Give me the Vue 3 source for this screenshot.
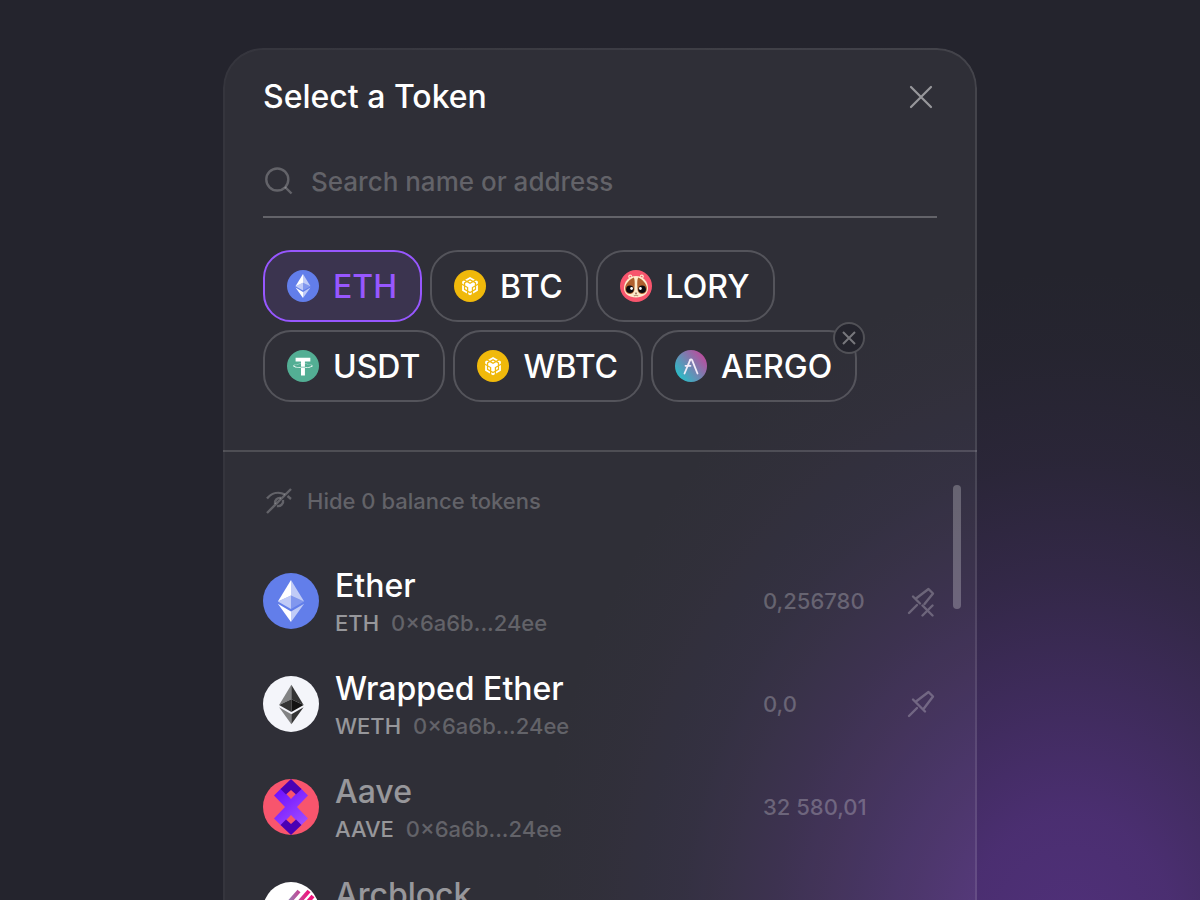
<template>
  <main class="page">
    <section class="modal" aria-labelledby="modal-title">
      <div class="modal-top">
        <header class="modal-header">
          <h1 id="modal-title">Select a Token</h1>
          <button type="button" class="icon-button" aria-label="Close">
            <svg width="32" height="32" viewBox="0 0 32 32" fill="none" stroke="currentColor" stroke-width="2.200" stroke-linecap="round">
              <path d="M6 6l20 20M26 6L6 26" />
            </svg>
          </button>
        </header>

        <div class="search">
          <label for="token-search" aria-label="Search name or address">
            <svg width="32" height="32" viewBox="0 0 32 32" fill="none" stroke="currentColor" stroke-width="2.400">
              <circle cx="14.300" cy="14.500" r="11" />
              <path d="M22 22l6.500 6.500" />
            </svg>
          </label>
          <input id="token-search" v-model="query" type="text" placeholder="Search name or address" />
        </div>

        <div class="chips">
          <div v-for="chip in chips" :key="chip.label" class="chip-wrapper">
            <button type="button" class="chip" :class="{ active: chip.label === selected }" @click="selected = chip.label">
              <svg class="chip-icon" viewBox="0 0 32 32" aria-hidden="true">
                <use :href="`#${chip.icon}`" />
              </svg>
              <span>{{ chip.label }}</span>
            </button>
            <button v-if="chip.removable" type="button" class="chip-remove" :aria-label="`Remove ${chip.label}`">
              <svg width="16" height="16" viewBox="0 0 16 16" fill="none" stroke="currentColor" stroke-width="2">
                <path d="M2 2l12 12M14 2L2 14" />
              </svg>
            </button>
          </div>
        </div>
      </div>

      <div class="modal-list">
        <button type="button" class="hide-toggle">
          <svg width="32" height="32" viewBox="0 0 32 32" fill="none" stroke="currentColor" stroke-width="2.400">
            <path d="M4 28L28 4" />
            <path d="M4 13.500c5-6 12-7 18-4M24.500 11l3.500 3" />
            <path d="M12 19a5 5 0 0 1 6-6M20 15a5 5 0 0 1-6 6" />
          </svg>
          <span>Hide 0 balance tokens</span>
        </button>

        <ul class="tokens">
          <li v-for="token in tokens" :key="token.name" class="token">
            <svg class="token-icon" :viewBox="token.viewBox || '0 0 32 32'" aria-hidden="true">
              <use :href="`#${token.icon}`" />
            </svg>
            <div class="token-info">
              <h2 :class="{ muted: token.muted }">{{ token.name }}</h2>
              <p>
                <span class="token-symbol">{{ token.symbol }}</span>
                <span class="token-address">{{ token.address }}</span>
              </p>
            </div>
            <span class="token-amount">{{ token.amount }}</span>
            <span class="token-action">
              <button v-if="token.pin" type="button" class="icon-button pin" :aria-label="`${token.pin} ${token.name}`">
                <svg width="32" height="32" viewBox="0 0 32 32" fill="none" stroke="currentColor" stroke-width="2.400" stroke-linecap="round" stroke-linejoin="round">
                  <path d="M4 28l8-8" />
                  <template v-if="token.pin === 'Unpin'">
                    <path d="M8 11.500l7 7M11 13.500L23.500 4l4.500 4.500-8.500 10.500" />
                    <path d="M17.500 20.500l10 10M27.500 20.500l-10 10" />
                  </template>
                  <path v-else d="M8 11.500l12 12M11 13.500L23.500 4l4.500 4.500-9.500 12.500" />
                </svg>
              </button>
            </span>
          </li>
        </ul>
        <div class="scrollbar"></div>
      </div>
    </section>

    <!-- 아이콘 심볼 -->
    <svg class="symbols" width="0" height="0" aria-hidden="true">
      <defs>
        <linearGradient id="aergo-fill" x1="4" y1="26" x2="28" y2="6" gradientUnits="userSpaceOnUse">
          <stop offset="0" stop-color="#2ebac6" />
          <stop offset="1" stop-color="#b6509e" />
        </linearGradient>
        <linearGradient id="aave-fill" x1="12" y1="10" x2="42" y2="46" gradientUnits="userSpaceOnUse">
          <stop offset="0" stop-color="#6a0dff" />
          <stop offset="1" stop-color="#a24dff" />
        </linearGradient>
        <linearGradient id="arc-fill" x1="24" y1="0" x2="46" y2="0" gradientUnits="userSpaceOnUse">
          <stop offset="0" stop-color="#8f86b4" />
          <stop offset="1" stop-color="#f0147d" />
        </linearGradient>
      </defs>

      <symbol id="eth" viewBox="0 0 32 32">
        <circle cx="16" cy="16" r="16" fill="#627eea" />
        <g fill="#fff">
          <path fill-opacity=".6" d="M16 4v8.870l7.500 3.350z" />
          <path d="M16 4L8.500 16.220l7.500-3.350z" />
          <path fill-opacity=".6" d="M16 21.970V28l7.500-10.380z" />
          <path d="M16 28v-6.030l-7.500-4.350z" />
          <path fill-opacity=".2" d="M16 20.570l7.500-4.350-7.500-3.350z" />
          <path fill-opacity=".6" d="M8.500 16.220l7.500 4.350v-7.700z" />
        </g>
      </symbol>

      <symbol id="weth" viewBox="0 0 32 32">
        <circle cx="16" cy="16" r="16" fill="#f4f5fa" />
        <path fill="#828384" d="M16.200 5L9.200 16.500l7-3.200z" />
        <path fill="#343434" d="M16.200 5v8.300l7 3.200z" />
        <path fill="#343434" d="M9.200 16.500l7 4.100v-7.300z" />
        <path fill="#131313" d="M16.200 20.600l7-4.100-7-3.200z" />
        <path fill="#828384" d="M9.200 17.800l7 9.800v-5.700z" />
        <path fill="#343434" d="M16.200 27.600l7-9.800-7 4.100z" />
      </symbol>

      <symbol id="bnb" viewBox="0 0 32 32">
        <circle cx="16" cy="16" r="16" fill="#f0b90b" />
        <path
          fill="#fff"
          transform="translate(6.900 7) scale(.76)"
          d="M5.631 3.676 12.001 0l6.367 3.676-2.34 1.358L12 2.716 7.972 5.034l-2.34-1.358Zm12.737 4.636-2.34-1.358L12 9.272 7.972 6.954l-2.34 1.358v2.716l4.026 2.318v4.636L12 19.341l2.341-1.359v-4.636l4.027-2.318V8.312Zm0 7.352v-2.716l-2.34 1.358v2.716l2.34-1.358Zm1.663.96-4.027 2.318v2.717l6.368-3.677V10.63l-2.34 1.358v4.636Zm-2.34-10.63 2.34 1.358v2.716l2.341-1.358V5.994l-2.34-1.358-2.342 1.358ZM9.657 19.926v2.716L12 24l2.341-1.358v-2.716l-2.34 1.358-2.342-1.358Zm-4.027-4.262 2.341 1.358v-2.716l-2.34-1.358v2.716Zm4.027-9.67L12 7.352l2.341-1.358L12 4.636 9.658 5.994Zm-5.69 1.358 2.341-1.358-2.34-1.358-2.342 1.358V8.71l2.341 1.358V7.352Zm0 4.636-2.34-1.358v7.352l6.368 3.677v-2.717l-4.027-2.318v-4.636Z"
        />
      </symbol>

      <symbol id="usdt" viewBox="0 0 32 32">
        <circle cx="16" cy="16" r="16" fill="#53ae94" />
        <path
          fill="#fff"
          d="M17.922 17.383v-.002c-.11.008-.677.042-1.942.042-1.01 0-1.721-.03-1.971-.042v.003c-3.888-.171-6.79-.848-6.79-1.658 0-.809 2.902-1.486 6.79-1.66v2.644c.254.018.982.061 1.988.061 1.207 0 1.812-.05 1.925-.06v-2.643c3.88.173 6.775.85 6.775 1.658 0 .81-2.895 1.485-6.775 1.657m0-3.59v-2.366h5.414V7.819H8.595v3.608h5.414v2.365c-4.4.202-7.709 1.074-7.709 2.118 0 1.044 3.309 1.915 7.709 2.118v7.582h3.913v-7.584c4.393-.202 7.694-1.073 7.694-2.116 0-1.043-3.301-1.914-7.694-2.117"
        />
      </symbol>

      <symbol id="lory" viewBox="0 0 32 32">
        <circle cx="16" cy="16" r="16" fill="#f8556d" />
        <circle cx="10.200" cy="6.500" r="2" fill="#fdebcb" />
        <circle cx="21.800" cy="6.500" r="2" fill="#fdebcb" />
        <circle cx="10.400" cy="6.800" r="1" fill="#f8556d" />
        <circle cx="21.600" cy="6.800" r="1" fill="#f8556d" />
        <path fill="#fdebcb" d="M16 6c7 0 11.800 5 12 12 .1 6-5 9.500-12 9.500S3.900 24 4 18C4.200 11 9 6 16 6z" />
        <path fill="#b0602e" d="M13.800 7.500C10 9 6.500 12.500 5.200 17c-.6 4 1.500 7 4.600 7 3 0 4.500-2.300 4.700-5 .1-2 .8-9-.7-11.500z" />
        <path fill="#b0602e" d="M18.200 7.500c3.800 1.500 7.300 5 8.600 9.500.6 4-1.500 7-4.600 7-3 0-4.500-2.300-4.700-5-.1-2-.8-9 .7-11.500z" />
        <circle cx="9.900" cy="19.200" r="3.800" fill="#0b0b10" />
        <circle cx="22.100" cy="19.200" r="3.800" fill="#0b0b10" />
        <circle cx="11.600" cy="18.500" r="1.400" fill="#fff" />
        <circle cx="20.400" cy="18.500" r="1.400" fill="#fff" />
        <path fill="#6b3a22" d="M14.800 22.800h2.400L16 24.300z" />
        <path d="M13.800 25.400c1 .6 1.800.3 2.200-.6.400.9 1.200 1.200 2.200.6" fill="none" stroke="#6b3a22" stroke-width=".6" />
      </symbol>

      <symbol id="aergo" viewBox="0 0 32 32">
        <circle cx="16" cy="16" r="16" fill="url(#aergo-fill)" />
        <g fill="none" stroke="#f3ecf8" stroke-width="1.800" stroke-linecap="round" stroke-linejoin="round">
          <path d="M9.500 23.500l4-9.500M15 10.200c.5-1.200 1.600-1.200 2.100 0l5.400 13.300" />
          <path d="M10.500 15.800h5M13.500 14l1.500-3.800" />
        </g>
      </symbol>

      <symbol id="aave" viewBox="0 0 56 56">
        <circle cx="28" cy="28" r="28" fill="#f8556d" />
        <path fill="url(#aave-fill)" d="M18 9.500L11 16.500L22 28L11 39.500L18 46.500L28 36L38 46.500L45 39.500L34 28L45 16.500L38 9.500L28 20z" />
        <path fill="#4a00b4" d="M28 0l10.500 10-5.500 5.500L28 11l-5 4.500-5.500-5.500z" />
        <path fill="#4a00b4" d="M28 56l10.500-10-5.500-5.500L28 45l-5-4.500-5.500 5.500z" />
      </symbol>

      <symbol id="arcblock" viewBox="0 0 56 56">
        <circle cx="28" cy="28" r="28" fill="#fff" />
        <g fill="none" stroke="url(#arc-fill)" stroke-width="4">
          <path d="M14 34L36 9M24 34L46 9M34 32L50 14" />
        </g>
      </symbol>
    </svg>
  </main>
</template>

<script setup>
import { ref } from "vue";

const query = ref("");
const selected = ref("ETH");

const chips = [
  { label: "ETH", icon: "eth" },
  { label: "BTC", icon: "bnb" },
  { label: "LORY", icon: "lory" },
  { label: "USDT", icon: "usdt" },
  { label: "WBTC", icon: "bnb" },
  { label: "AERGO", icon: "aergo", removable: true },
];

const tokens = [
  { name: "Ether", symbol: "ETH", address: "0×6a6b...24ee", amount: "0,256780", icon: "eth", pin: "Unpin" },
  { name: "Wrapped Ether", symbol: "WETH", address: "0×6a6b...24ee", amount: "0,0", icon: "weth", pin: "Pin" },
  { name: "Aave", symbol: "AAVE", address: "0×6a6b...24ee", amount: "32 580,01", icon: "aave", viewBox: "0 0 56 56", muted: true },
  { name: "Arcblock", icon: "arcblock", viewBox: "0 0 56 56", muted: true },
];
</script>

<style>
body {
  background: #24242d;
}
</style>

<style scoped>
.page {
  box-sizing: border-box;
  height: 100vh;
  overflow: hidden;
  padding: 48px 24px 0;
  font-family: Inter, "Liberation Sans", sans-serif;
  font-weight: 500;
  color: #fff;
  background: radial-gradient(
      540px 680px at calc(50% + 470px) calc(100% + 50px),
      rgba(80, 48, 122, 1) 0%,
      rgba(80, 48, 122, 0.88) 20%,
      rgba(80, 48, 122, 0.6) 38%,
      rgba(80, 48, 122, 0.34) 55%,
      rgba(80, 48, 122, 0.14) 72%,
      rgba(80, 48, 122, 0.04) 88%,
      rgba(80, 48, 122, 0) 100%
    )
    #24242d;
}

.modal {
  position: relative;
  box-sizing: border-box;
  max-width: 754px;
  margin: 0 auto;
  border-radius: 40px;
  background: rgba(255, 255, 255, 0.05);
}

/* 오른쪽으로 갈수록 밝아지는 테두리 */
.modal::before {
  content: "";
  position: absolute;
  inset: 0;
  padding: 2px;
  border-radius: 40px;
  background: linear-gradient(to right, rgba(255, 255, 255, 0.03), rgba(255, 255, 255, 0.1));
  mask: linear-gradient(#000 0 0) content-box exclude, linear-gradient(#000 0 0);
  pointer-events: none;
}

.modal-top {
  padding: 28px 40px 48px;
  border-bottom: 2px solid rgba(255, 255, 255, 0.15);
}

.modal-header {
  display: flex;
  align-items: center;
  justify-content: space-between;
}

.modal-header h1 {
  margin: 0;
  font-size: 32px;
  font-weight: 500;
  line-height: 42px;
}

button {
  padding: 0;
  border: none;
  background: none;
  font: inherit;
  color: inherit;
  cursor: pointer;
}

.icon-button {
  display: flex;
  color: rgba(255, 255, 255, 0.5);
}

.search {
  display: flex;
  align-items: center;
  gap: 16px;
  margin-top: 32px;
  padding: 12px 0 16px;
  border-bottom: 2px solid rgba(255, 255, 255, 0.25);
  color: rgba(255, 255, 255, 0.25);
}

.search label {
  display: flex;
}

.search input {
  flex: 1;
  min-width: 0;
  height: 38px;
  padding: 0;
  border: none;
  outline: none;
  background: none;
  font: inherit;
  font-size: 26px;
  color: #fff;
}

.search input::placeholder {
  color: rgba(255, 255, 255, 0.25);
  opacity: 1;
}

.chips {
  display: flex;
  flex-wrap: wrap;
  gap: 8px;
  margin-top: 32px;
}

.chip-wrapper {
  position: relative;
}

.chip {
  display: flex;
  align-items: center;
  gap: 14px;
  box-sizing: border-box;
  height: 72px;
  padding: 0 23px 0 22px;
  border: 2px solid rgba(255, 255, 255, 0.18);
  border-radius: 28px;
  font-size: 32px;
}

.chip.active {
  border-color: #9757ff;
  background: rgba(151, 87, 255, 0.12);
  color: #9757ff;
}

.chip-icon {
  width: 32px;
  height: 32px;
}

.chip-remove {
  position: absolute;
  top: -8px;
  right: -8px;
  display: flex;
  align-items: center;
  justify-content: center;
  box-sizing: border-box;
  width: 32px;
  height: 32px;
  border: 2px solid #515157;
  border-radius: 50%;
  background: #24242d;
  color: #77777c;
}

.modal-list {
  position: relative;
  padding: 33px 40px;
}

.hide-toggle {
  display: flex;
  align-items: center;
  gap: 12px;
  font-size: 22px;
  color: rgba(255, 255, 255, 0.25);
}

.tokens {
  display: flex;
  flex-direction: column;
  gap: 31px;
  margin: 48px 0 0;
  padding: 0;
  list-style: none;
}

.token {
  display: flex;
  align-items: center;
  gap: 16px;
  height: 72px;
}

.token-icon {
  width: 56px;
  height: 56px;
}

.token-info {
  flex: 1;
}

.token-info h2 {
  margin: 0;
  font-size: 32px;
  font-weight: 500;
  line-height: 42px;
}

.token-info h2.muted {
  color: rgba(255, 255, 255, 0.5);
}

.token-info p {
  display: flex;
  gap: 12px;
  height: 30px;
  margin: 0;
  font-size: 22px;
  line-height: 32px;
}

.token-symbol {
  color: rgba(255, 255, 255, 0.5);
}

.token-address,
.token-amount {
  color: rgba(255, 255, 255, 0.25);
}

.token-amount {
  width: 126px;
  font-size: 22px;
  white-space: nowrap;
}

.token-action {
  width: 32px;
}

.pin {
  color: rgba(255, 255, 255, 0.25);
}

.scrollbar {
  position: absolute;
  top: 33px;
  right: 16px;
  width: 8px;
  height: 124px;
  border-radius: 4px;
  background: rgba(255, 255, 255, 0.25);
}

.symbols {
  position: absolute;
}
</style>
